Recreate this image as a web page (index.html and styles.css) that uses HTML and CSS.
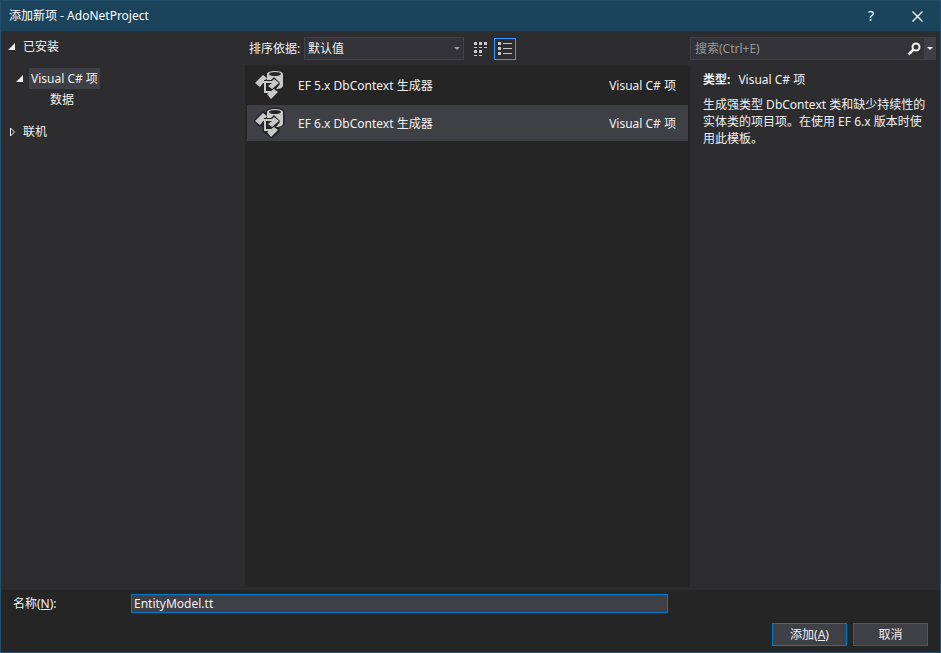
FILE: index.html
```html
<!DOCTYPE html>
<html lang="zh-CN">
<head>
<meta charset="utf-8">
<title>添加新项 - AdoNetProject</title>
<link rel="stylesheet" href="styles.css">
</head>
<body>
<svg class="defs" aria-hidden="true">
  <symbol id="generator" viewBox="0 0 32 32">
    <path class="halo" d="M13 5C14 1 29 1 29 5V17L24 20V24L18 30L13 26L10 24V17L6 18L1 14L9 6L13 8Z"/>
    <path class="glyph" d="M13 5C13 1 29 1 29 5V16C29 19 26 20 22 20L26 15L20 9L17 12H13Z"/>
    <ellipse class="hole" cx="21" cy="5" rx="6" ry="2"/>
    <path class="glyph" d="M1 14L9 6L13 9L6 18Z"/>
    <path class="hole" d="M10 11H17L20 8L26 14L19 21L15 19H14V22H10Z"/>
    <path class="connector" d="M9 13H20M11 13V23H17"/>
    <path class="glyph" d="M18 12L20 10L25 14L18 20L14 17L18 14Z"/>
    <path class="glyph" d="M13 25L20 20L24 23L17 30Z"/>
  </symbol>
</svg>
<div class="dialog">
  <header class="titlebar">
    <h1 class="title">添加新项 - AdoNetProject</h1>
    <button class="caption-button" aria-label="帮助">?</button>
    <button class="caption-button" aria-label="关闭"><svg width="11" height="11" viewBox="0 0 11 11"><path d="M.5 .5L10.5 10.5M10.5 .5L.5 10.5" stroke="#fff" stroke-width="1.3"/></svg></button>
  </header>
  <main class="content">
    <nav class="tree">
      <a class="node" href="#"><svg class="twisty" viewBox="0 0 8 8"><path d="M7 0V7H0Z"/></svg>已安装</a>
      <a class="node child" href="#"><svg class="twisty" viewBox="0 0 8 8"><path d="M7 0V7H0Z"/></svg><span class="current">Visual C# 项</span></a>
      <a class="node leaf" href="#">数据</a>
      <a class="node" href="#"><svg class="twisty closed" viewBox="0 0 8 10"><path d="M2.5 1V9L6.5 5Z"/></svg>联机</a>
    </nav>
    <section class="templates">
      <div class="toolbar">
        <label for="sort">排序依据:</label>
        <div class="sort-box">
          <select id="sort" class="sort"><option>默认值</option></select>
          <svg class="arrow" width="6" height="3" viewBox="0 0 6 3"><path d="M0 0H6L3 3Z" fill="#999"/></svg>
        </div>
        <button class="view" aria-label="中等图标"><svg width="14" height="14" viewBox="0 0 14 14" fill="#c8c8c8"><path d="M0 0h3v3H0zM5 0h3v3H5zM10 0h3v3h-3zM0 5h3v1H0zM5 5h3v1H5zM10 5h3v1h-3zM0 8h3v3H0zM5 8h3v3H5zM0 13h3v1H0zM5 13h3v1H5z"/></svg></button>
        <button class="view active" aria-label="小图标"><svg width="14" height="14" viewBox="0 0 14 14" fill="#c8c8c8"><path d="M0 0h3v3H0zM5 1h9v1H5zM0 5h3v3H0zM5 6h9v1H5zM0 10h3v3H0zM5 11h9v1H5z"/></svg></button>
      </div>
      <ul class="list">
        <li class="item"><svg class="item-icon"><use href="#generator"/></svg><span class="item-name">EF 5.x DbContext 生成器</span><span>Visual C# 项</span></li>
        <li class="item selected"><svg class="item-icon"><use href="#generator"/></svg><span class="item-name">EF 6.x DbContext 生成器</span><span>Visual C# 项</span></li>
      </ul>
    </section>
    <aside class="details">
      <div class="search">
        <input class="search-input" type="search" aria-label="搜索" placeholder="搜索(Ctrl+E)">
        <button class="search-go" aria-label="开始搜索"><svg width="14" height="14" viewBox="0 0 14 14" fill="none" stroke="#f1f1f1"><circle cx="9" cy="5" r="3.5" stroke-width="2"/><path d="M6.500 7.500L1.500 12.500" stroke-width="2.500"/></svg></button>
        <button class="search-menu" aria-label="搜索选项"><svg width="6" height="3" viewBox="0 0 6 3"><path d="M0 0H6L3 3Z" fill="#f1f1f1"/></svg></button>
      </div>
      <div class="info">
        <p class="type"><b>类型:</b><span>Visual C# 项</span></p>
        <p class="description">生成强类型 DbContext 类和缺少持续性的实体类的项目项。在使用 EF 6.x 版本时使用此模板。</p>
      </div>
    </aside>
  </main>
  <footer class="footer">
    <div class="name-row">
      <label class="name-label" for="name">名称(<u>N</u>):</label>
      <input id="name" class="name" type="text" value="EntityModel.tt">
    </div>
    <div class="actions">
      <button class="action primary">添加(<u>A</u>)</button>
      <button class="action">取消</button>
    </div>
  </footer>
</div>
</body>
</html>
```
FILE: styles.css
```css
* {
  box-sizing: border-box;
}

body {
  margin: 0;
  background: #252526;
}

body,
button,
input,
select {
  color: #f1f1f1;
  font: 12px/16px "Noto Sans", "Noto Sans CJK SC", sans-serif;
}

button,
input,
select {
  margin: 0;
  padding: 0;
  border: 0;
  border-radius: 0;
  outline: 0;
  appearance: none;
}

button {
  display: flex;
  align-items: center;
  justify-content: center;
  background: none;
}

svg {
  flex: none;
}

.defs {
  position: absolute;
  width: 0;
  height: 0;
}

.dialog {
  display: flex;
  flex-direction: column;
  min-height: 100vh;
  border: 1px solid #24506b;
}

.titlebar {
  display: flex;
  height: 30px;
  align-items: center;
  padding-left: 8px;
  background: #1b435b;
}

.title {
  flex: 1;
  margin: 0;
  color: #fff;
  font-size: 12px;
  font-weight: 400;
}

.caption-button {
  width: 46px;
  height: 30px;
  color: #fff;
  font-size: 14px;
}

.content {
  display: grid;
  flex: 1;
  grid-template-columns: 244fr 445fr 250fr;
  background: #2d2d30;
}

.tree {
  display: flex;
  flex-direction: column;
  padding: 5px 7px;
}

.node {
  display: flex;
  height: 21px;
  align-items: center;
  gap: 7px;
  margin-bottom: 11px;
  color: #f1f1f1;
  line-height: 17px;
  text-decoration: none;
}

.child {
  margin-bottom: 0;
  padding-left: 8px;
  gap: 5px;
}

.current {
  padding: 2px;
  background: #3f3f46;
}

.leaf {
  padding-left: 42px;
}

.twisty {
  width: 8px;
  height: 8px;
  fill: #f1f1f1;
}

.closed {
  height: 10px;
  fill: none;
  stroke: #f1f1f1;
}

.templates {
  display: flex;
  flex-direction: column;
  padding: 6px 0 3px;
}

.toolbar {
  display: flex;
  align-items: center;
  height: 23px;
  margin-bottom: 5px;
  padding-left: 4px;
}

.toolbar label {
  width: 55px;
  white-space: nowrap;
}

.sort-box {
  display: grid;
  width: 160px;
  align-items: center;
  margin-right: 6px;
}

.sort {
  grid-area: 1 / 1;
  height: 23px;
  padding: 0 3px;
  border: 1px solid #434346;
  background: #333337;
}

.arrow {
  grid-area: 1 / 1;
  justify-self: end;
  margin-right: 4px;
  pointer-events: none;
}

.view {
  width: 22px;
  height: 22px;
  margin-right: 2px;
}

.active {
  border: 1px solid #3399ff;
}

.list {
  display: flex;
  flex: 1;
  flex-direction: column;
  gap: 2px;
  margin: 0;
  padding: 2px;
  background: #252526;
  list-style: none;
}

.item {
  display: flex;
  height: 36px;
  align-items: center;
  padding: 0 12px 0 7px;
  line-height: 18px;
}

.selected {
  background: #3f3f46;
}

.item-icon {
  width: 32px;
  height: 32px;
  margin-right: 12px;
}

.item-name {
  flex: 1;
}

.item span {
  padding-top: 2px;
}

.halo {
  fill: #252526;
  stroke: #252526;
  stroke-width: 3;
  stroke-linejoin: round;
}

.glyph {
  fill: #c8c8c8;
}

.hole {
  fill: #252526;
}

.connector {
  fill: none;
  stroke: #c8c8c8;
  stroke-width: 2;
}

.details {
  padding: 6px 4px 0 0;
}

.search {
  display: flex;
  height: 23px;
  border: 1px solid #3f3f46;
  background: #333337;
}

.search-input {
  flex: 1;
  min-width: 0;
  padding: 0 4px;
  background: none;
}

.search-input::placeholder {
  color: #999;
}

.search-go {
  width: 20px;
}

.search-menu {
  width: 11px;
  background: #3f3f46;
}

.info {
  padding: 12px 6px 0 13px;
}

.type {
  display: flex;
  gap: 8px;
  margin: 0 0 8px;
}

.description {
  margin: 0;
  line-height: 17px;
}

.footer {
  padding: 4px 12px 6px;
}

.name-row {
  display: flex;
  align-items: center;
  margin-bottom: 10px;
}

.name-label {
  width: 118px;
}

.name {
  flex: 0 1 537px;
  height: 19px;
  padding: 0 2px;
  border: 1px solid #007acc;
  background: #3f3f46;
}

.actions {
  display: flex;
  justify-content: flex-end;
  gap: 6px;
}

.action {
  width: 75px;
  height: 23px;
  border: 1px solid #555558;
  background: #3f3f46;
}

.primary {
  border-color: #007acc;
}
```
